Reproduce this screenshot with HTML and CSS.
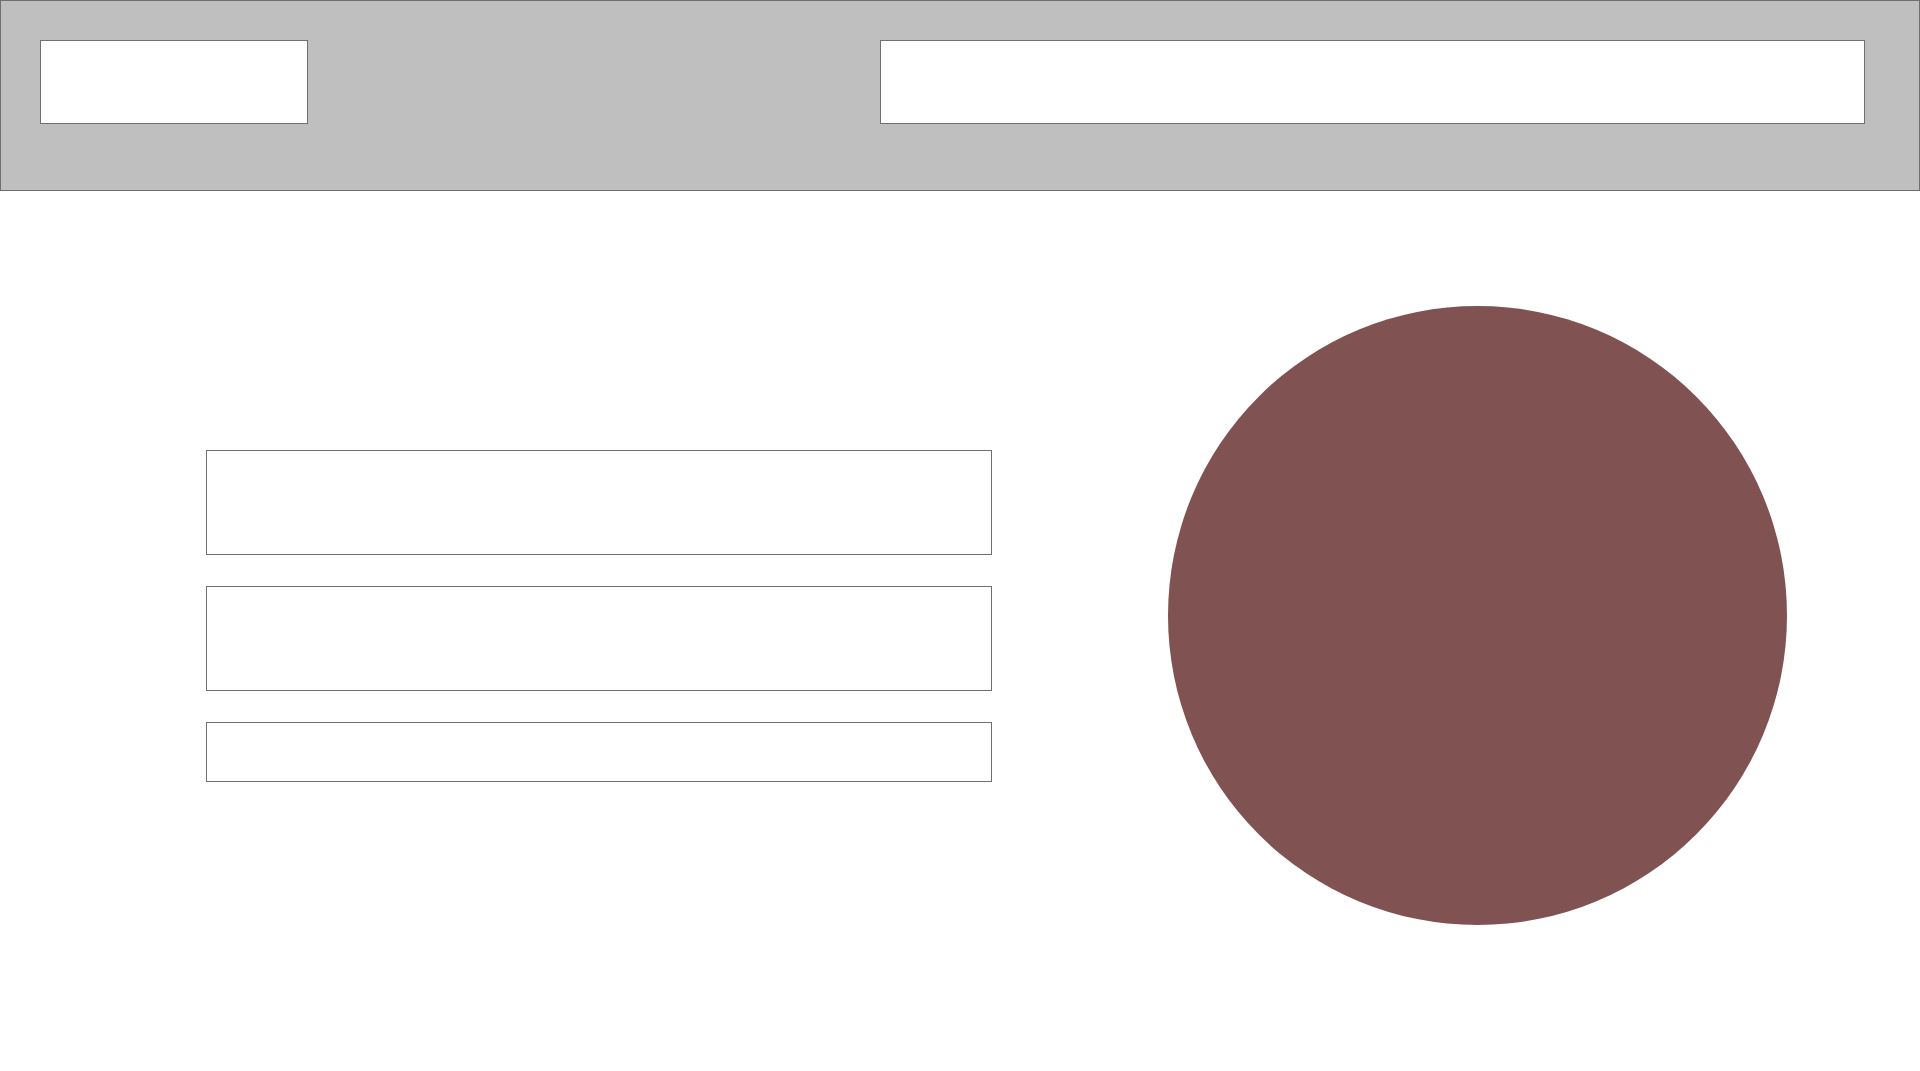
FILE: index.html
```html
<!DOCTYPE html>
<html lang="en">
<head>
<meta charset="utf-8">
<title>Page</title>
<link rel="stylesheet" href="styles.css">
</head>
<body>
<header class="topbar">
  <div class="logo"></div>
  <div class="search"></div>
</header>
<main class="hero">
  <div class="fields">
    <div class="field"></div>
    <div class="field"></div>
    <div class="field field-short"></div>
  </div>
  <div class="disc"></div>
</main>
</body>
</html>
```
FILE: styles.css
```css
* { box-sizing: border-box; }
html, body { margin: 0; padding: 0; background: #ffffff; font-family: "Liberation Sans", Arial, sans-serif; }
.topbar {
  display: flex;
  align-items: flex-start;
  height: 191px;
  padding: 39px 54px 0 39px;
  background: #bfbfbf;
  border: 1px solid #6f6f6f;
}
.logo {
  width: 268px;
  height: 84px;
  background: #ffffff;
  border: 1px solid #6f6f6f;
}
.search {
  margin-left: auto;
  width: 985px;
  height: 84px;
  background: #ffffff;
  border: 1px solid #6f6f6f;
}
.hero {
  display: flex;
  align-items: center;
  padding: 115px 0 0 206px;
  gap: 176px;
}
.fields {
  display: flex;
  flex-direction: column;
  gap: 31px;
  width: 786px;
}
.field {
  height: 105px;
  border: 1px solid #6f6f6f;
  background: #ffffff;
}
.field-short { height: 60px; }
.disc {
  width: 619px;
  height: 619px;
  border-radius: 50%;
  background: #815252;
}
```
